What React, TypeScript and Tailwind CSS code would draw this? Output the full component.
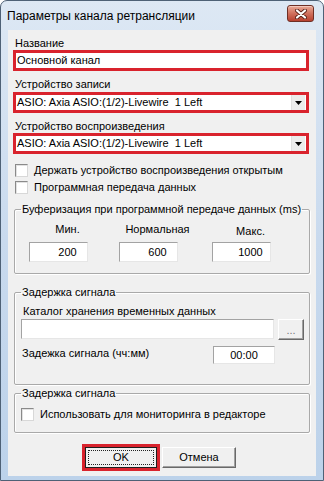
import React from "react";

const font = "font-['Liberation_Sans',Arial,sans-serif]";

function Checkbox({ label }: { label: string }) {
  return (
    <div className="flex items-center h-[17px]">
      <div className="w-[13px] h-[13px] bg-white border border-t-[#8a8a8a] border-l-[#8a8a8a] border-r-[#d8d8d8] border-b-[#d8d8d8] shadow-[inset_1px_1px_0_#e2e2e2]" />
      <span className="ml-[6px] text-[11px] leading-[13px] whitespace-nowrap">{label}</span>
    </div>
  );
}

function Combo({ value }: { value: string }) {
  return (
    <div className="h-[21px] border-[3px] border-[#d9232d] bg-white flex items-stretch">
      <div className="flex-1 pl-[1px] text-[11px] leading-[15px] whitespace-pre">{value}</div>
      <div className="w-[14px] my-[0px] mr-[1px] bg-[#ececec] border-l border-[#e0e0e0] flex items-center justify-center">
        <svg width="7" height="4" viewBox="0 0 7 4">
          <path d="M0 0h7L3.5 4z" fill="#000" />
        </svg>
      </div>
    </div>
  );
}

const sunken =
  "bg-white border border-t-[#a3a3a3] border-l-[#a3a3a3] border-r-[#e6e6e6] border-b-[#e6e6e6]";
const raised =
  "bg-[#f0f0f0] border border-t-[#ffffff] border-l-[#ffffff] border-r-[#696969] border-b-[#696969] shadow-[inset_-1px_-1px_0_#a0a0a0]";
const group =
  "rounded-[2px] border border-[#a9a9a9] shadow-[inset_1px_1px_0_#ffffff,1px_1px_0_#ffffff] min-w-0";

function BufCol({ label, value, low }: { label: string; value: string; low?: boolean }) {
  return (
    <div className="flex flex-col w-[77px]">
      <div className={`text-center text-[11px] leading-[13px] ${low ? "mt-[2px]" : ""}`}>{label}</div>
      <div className={`${sunken} w-[59px] h-[20px] pl-[18px] text-center text-[11px] leading-[18px] ${low ? "mt-[4px]" : "mt-[6px]"}`}>
        {value}
      </div>
    </div>
  );
}

export default function App() {
  return (
    <div className={`w-[324px] h-[481px] ${font} text-black`}>
      <div className="w-[324px] h-[481px] flex flex-col rounded-t-[7px] border border-[#4e6176] bg-gradient-to-b from-[#dde8f4] via-[#c9daee] to-[#bcd2ea] overflow-hidden">
        {/* Title bar */}
        <div className="h-[29px] flex items-start justify-between pl-[6px] pr-[9px]">
          <span className="mt-[8px] text-[12px] leading-[15px] whitespace-nowrap">Параметры канала ретрансляции</span>
          <div className="mt-[4px] w-[27px] h-[17px] rounded-[3px] border border-[#6e2f25] bg-gradient-to-b from-[#e9a996] via-[#d0705d] to-[#b7402f] shadow-[inset_0_1px_0_#f4c8bb] flex items-center justify-center">
            <svg width="12" height="10" viewBox="0 0 12 10">
              <path d="M2 1.5l8 7M10 1.5l-8 7" stroke="#5a2219" strokeWidth="4" strokeLinecap="round" />
              <path d="M2 1.5l8 7M10 1.5l-8 7" stroke="#ffffff" strokeWidth="2.2" strokeLinecap="round" />
            </svg>
          </div>
        </div>

        {/* Client area */}
        <div className="flex-1 px-[7px] pb-[4px] flex">
          <div className="flex-1 bg-[#f0f0f0] pl-[5px] pr-[7px] flex flex-col">
            <div className="mt-[7px] h-[13px] text-[11px] leading-[13px] pl-[2px]">Название</div>
            <div className="h-[21px] border-[3px] border-[#d9232d] bg-white pl-[1px] text-[11px] leading-[15px]">Основной канал</div>

            <div className="mt-[7px] h-[13px] text-[11px] leading-[13px] pl-[2px]">Устройство записи</div>
            <div className="mt-[1px]">
              <Combo value="ASIO: Axia ASIO:(1/2)-Livewire  1 Left" />
            </div>

            <div className="mt-[7px] h-[13px] text-[11px] leading-[13px] pl-[2px]">Устройство воспроизведения</div>
            <Combo value="ASIO: Axia ASIO:(1/2)-Livewire  1 Left" />

            <div className="mt-[8px] pl-[2px] flex flex-col">
              <Checkbox label="Держать устройство воспроизведения открытым" />
              <Checkbox label="Программная передача данных" />
            </div>

            <fieldset className={`mt-[7px] ml-[1px] mr-[-1px] pl-[6px] pb-[11px] ${group}`}>
              <legend className="px-[1px] text-[11px] leading-[13px] whitespace-nowrap">Буферизация при программной передаче данных (ms)</legend>
              <div className="mt-[7px] flex pl-[8px]">
                <BufCol label="Мин." value="200" />
                <div className="ml-[13px]">
                  <BufCol label="Нормальная" value="600" />
                </div>
                <div className="ml-[16px]">
                  <BufCol label="Макс." value="1000" low />
                </div>
              </div>
            </fieldset>

            <fieldset className={`mt-[12px] ml-[1px] mr-[-1px] pl-[6px] pb-[20px] ${group}`}>
              <legend className="px-[1px] text-[11px] leading-[13px]">Задержка сигнала</legend>
              <div className="mt-[6px] ml-[2px] text-[11px] leading-[13px]">Каталог хранения временных данных</div>
              <div className="mt-[1px] flex">
                <div className={`${sunken} w-[253px] h-[20px]`} />
                <div className={`${raised} ml-[4px] w-[26px] h-[21px] flex items-end justify-center pb-[3px] text-[11px] leading-[11px] text-[#7a7a7a]`}>...</div>
              </div>
              <div className="mt-[6px] flex items-start">
                <div className="mt-[1px] ml-[1px] w-[191px] text-[11px] leading-[13px] whitespace-nowrap">Задежка сигнала (чч:мм)</div>
                <div className={`${sunken} w-[62px] h-[18px] text-center text-[11px] leading-[16px]`}>00:00</div>
              </div>
            </fieldset>

            <fieldset className={`mt-[2px] ml-[1px] mr-[-1px] pl-[6px] pb-[9px] ${group}`}>
              <legend className="px-[1px] text-[11px] leading-[13px]">Задержка сигнала</legend>
              <div className="mt-[6px]">
                <Checkbox label="Использовать для мониторинга в редакторе" />
              </div>
            </fieldset>

            <div className="mt-[11px] flex items-center pl-[69px]">
              <div className="w-[78px] h-[27px] border-[3px] border-[#d9232d]">
                <div className="w-full h-full bg-[#f0f0f0] border border-[#1e1e1e] p-[2px]">
                  <div className="w-full h-full border border-dotted border-[#222] flex items-center justify-center text-[11px] leading-[13px]">OK</div>
                </div>
              </div>
              <div className={`${raised} ml-[2px] w-[74px] h-[21px] flex items-center justify-center text-[11px] leading-[13px]`}>Отмена</div>
            </div>
          </div>
        </div>
      </div>
    </div>
  );
}
